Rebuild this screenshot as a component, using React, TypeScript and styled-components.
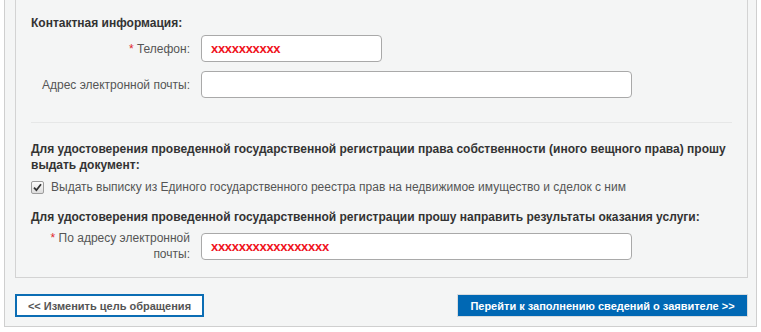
import React from 'react';
import styled, { createGlobalStyle } from 'styled-components';

const GlobalStyle = createGlobalStyle`
  body {
    margin: 0;
    background: #ffffff;
    font-family: "Liberation Sans", Arial, sans-serif;
    font-size: 12px;
    color: #333;
  }
`

const Outer = styled.div`
  margin-left: 4px;
  width: 753px;
  height: 327px;
  box-sizing: border-box;
  border: 1px solid #cfcfcf;
  border-top: none;
  background: #f4f5f5;
  padding: 0 8px 0 10px;
`

const Panel = styled.div`
  height: 278px;
  box-sizing: border-box;
  border: 1px solid #d3d3d3;
  border-top: none;
  padding: 15px 15px 0 15px;
`

const SectionTitle = styled.div`
  font-weight: bold;
  font-size: 12px;
  line-height: 16px;
  color: #333;
`

const Row = styled.div<{ $top: number }>`
  display: flex;
  align-items: center;
  margin-top: ${p => p.$top}px;
`

const Label = styled.label`
  width: 159px;
  padding-right: 11px;
  text-align: right;
  color: #555;
  font-size: 12px;
  line-height: 16px;
`

const Req = styled.span`
  color: #e0262b;
`

const Field = styled.div<{ $w: number }>`
  width: ${p => p.$w}px;
  height: 27px;
  box-sizing: border-box;
  border: 1px solid #a9a9a9;
  border-radius: 4px;
  background: #fff;
  display: flex;
  align-items: center;
  padding-left: 9px;
`

const Masked = styled.span`
  color: #f0141e;
  font-weight: bold;
  font-size: 13px;
  letter-spacing: -0.3px;
`

const Divider = styled.div`
  height: 1px;
  background: #e6e7e7;
  margin: 24px 0 0 0;
`

const Para = styled(SectionTitle)<{ $top: number }>`
  margin-top: ${p => p.$top}px;
`

const CheckRow = styled.label`
  display: flex;
  align-items: center;
  margin-top: 6px;
  color: #555;
  font-size: 12px;
  line-height: 16px;
`

const CheckBox = styled.span`
  width: 13px;
  height: 13px;
  box-sizing: border-box;
  margin: 0 7px 0 0;
  border: 1px solid #9d9d9d;
  border-radius: 2px;
  background: linear-gradient(#fdfdfd, #dcdcdc);
  display: flex;
  align-items: center;
  justify-content: center;
`

const Footer = styled.div`
  display: flex;
  justify-content: space-between;
  margin-top: 16px;
`

const Button = styled.button<{ $primary?: boolean }>`
  height: 23px;
  box-sizing: border-box;
  font-family: "Liberation Sans", Arial, sans-serif;
  font-weight: bold;
  font-size: 11px;
  cursor: pointer;
  padding: 0;
  border: ${p => p.$primary ? '1px solid #d8dcdf' : '2px solid #0b6db4'};
  background: ${p => p.$primary ? '#0068b4' : '#ffffff'};
  color: ${p => p.$primary ? '#ffffff' : '#555'};
`

const App: React.FC = () => {
  return (
    <>
      <GlobalStyle />
      <Outer>
        <Panel>
          <SectionTitle>Контактная информация:</SectionTitle>
          <Row $top={4}>
            <Label><Req>*</Req> Телефон:</Label>
            <Field $w={181}><Masked>xxxxxxxxxx</Masked></Field>
          </Row>
          <Row $top={9}>
            <Label>Адрес электронной почты:</Label>
            <Field $w={431} />
          </Row>
          <Divider />
          <Para $top={18}>
            Для удостоверения проведенной государственной регистрации права собственности (иного вещного права) прошу выдать документ:
          </Para>
          <CheckRow>
            <CheckBox>
              <svg width="9" height="9" viewBox="0 0 9 9">
                <path d="M1 4.6 L3.4 7.2 L8 1.3" fill="none" stroke="#333" strokeWidth="1.8" />
              </svg>
            </CheckBox>
            Выдать выписку из Единого государственного реестра прав на недвижимое имущество и сделок с ним
          </CheckRow>
          <Para $top={14}>
            Для удостоверения проведенной государственной регистрации прошу направить результаты оказания услуги:
          </Para>
          <Row $top={5}>
            <Label><Req>*</Req> По адресу электронной почты:</Label>
            <Field $w={431}><Masked>xxxxxxxxxxxxxxxxx</Masked></Field>
          </Row>
        </Panel>
        <Footer>
          <Button style={{ width: 189 }}>&lt;&lt; Изменить цель обращения</Button>
          <Button $primary style={{ width: 291 }}>Перейти к заполнению сведений о заявителе &gt;&gt;</Button>
        </Footer>
      </Outer>
    </>
  );
};

export default App;
